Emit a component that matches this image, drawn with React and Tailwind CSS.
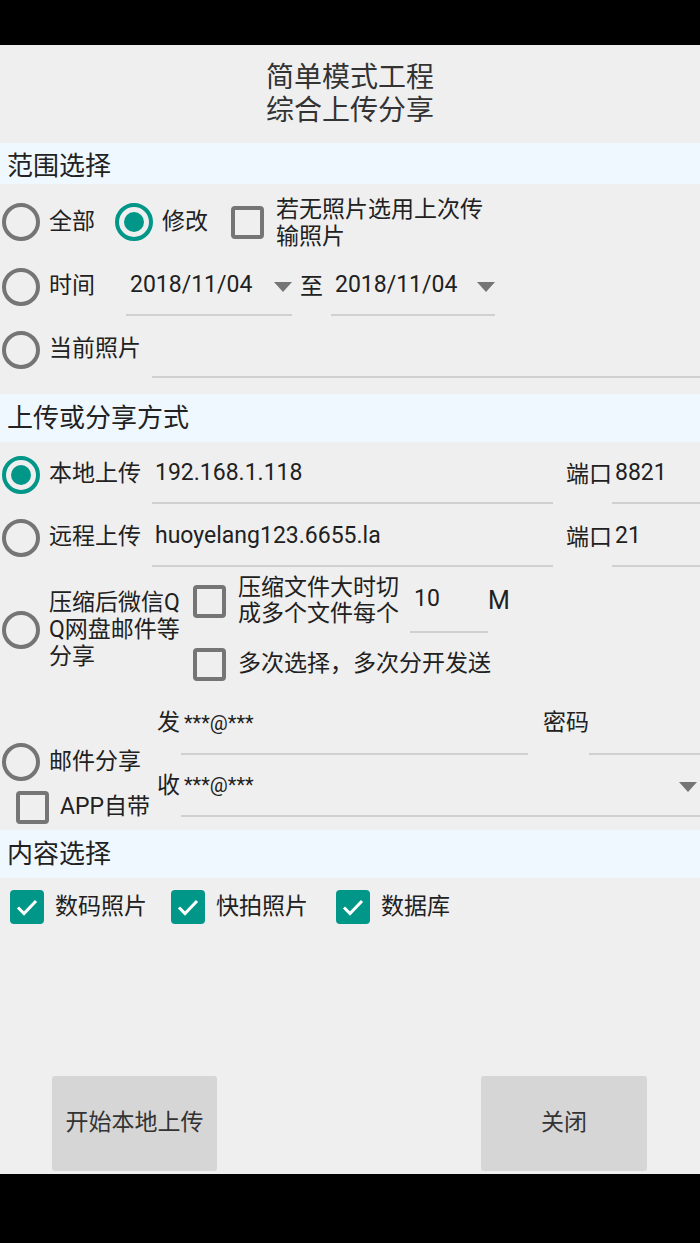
import React from 'react';

const Radio = ({ checked }) => (
  <div
    className={`w-[38px] h-[38px] shrink-0 rounded-full border-4 flex items-center justify-center ${
      checked ? 'border-[#009688]' : 'border-[#757575]'
    }`}
  >
    {checked && <div className="w-[20px] h-[20px] rounded-full bg-[#009688]" />}
  </div>
);

const Box = ({ checked }) =>
  checked ? (
    <div className="w-[34px] h-[34px] shrink-0 rounded-[4px] bg-[#009688] flex items-center justify-center">
      <svg width="28" height="28" viewBox="0 0 28 28">
        <polyline points="5,14.5 11,20.5 23,8" fill="none" stroke="#fff" strokeWidth="3" />
      </svg>
    </div>
  ) : (
    <div className="w-[33px] h-[33px] shrink-0 rounded-[4px] border-4 border-[#757575]" />
  );

const Caret = () => (
  <svg width="18" height="10" viewBox="0 0 18 10" className="shrink-0 mt-[3px]">
    <polygon points="0,0 18,0 9,10" fill="#757575" />
  </svg>
);

const Band = ({ children, tall }) => (
  <div
    className={`bg-[#f0f8ff] pl-[7px] flex items-center text-[26px] text-[#222] ${
      tall ? 'h-[48px]' : 'h-[41px] pt-[6px]'
    }`}
  >
    {children}
  </div>
);

export default function App() {
  return (
    <div className="h-[1243px] flex flex-col bg-black font-['Roboto','Noto_Sans_CJK_SC',sans-serif] text-[23px] text-[#212121]">
      <div className="h-[45px] shrink-0" />

      <div className="flex-1 flex flex-col bg-[#efefef]">
        {/* title */}
        <div className="h-[98px] pt-[16px] flex flex-col items-center text-[28px] leading-[33px] text-[#333]">
          <div>简单模式工程</div>
          <div>综合上传分享</div>
        </div>

        <Band>范围选择</Band>

        <div className="h-[70px] pt-[6px] pl-[2px] flex items-center">
          <Radio />
          <span className="ml-[9px]">全部</span>
          <div className="ml-[20px]">
            <Radio checked />
          </div>
          <span className="ml-[9px]">修改</span>
          <div className="ml-[23px]">
            <Box />
          </div>
          <div className="ml-[12px] leading-[27px] pt-[2px]">
            若无照片选用上次传
            <br />
            输照片
          </div>
        </div>

        <div className="h-[63px] pl-[2px] flex items-stretch">
          <div className="flex items-center pt-[2px]">
            <Radio />
            <span className="ml-[9px]">时间</span>
          </div>
          <div className="ml-[31px] w-[166px] flex items-center pl-[4px] pt-[3px] border-b-2 border-[#d0d0d0] mb-[1px]">
            <span className="flex-1">2018/11/04</span>
            <Caret />
          </div>
          <div className="ml-[8px] flex items-center pt-[3px]">至</div>
          <div className="ml-[8px] w-[164px] flex items-center pl-[4px] pt-[3px] border-b-2 border-[#d0d0d0] mb-[1px]">
            <span className="flex-1">2018/11/04</span>
            <Caret />
          </div>
        </div>

        <div className="h-[63px] pl-[2px] flex items-stretch">
          <div className="flex items-center pt-[2px]">
            <Radio />
            <span className="ml-[9px]">当前照片</span>
          </div>
          <div className="ml-[11px] flex-1 border-b-2 border-[#d0d0d0] mb-[2px]" />
        </div>

        <div className="h-[14px]" />
        <Band tall>上传或分享方式</Band>

        {[
          ['本地上传', '192.168.1.118', '8821', true],
          ['远程上传', 'huoyelang123.6655.la', '21', false],
        ].map(([label, host, port, on]) => (
          <div key={label} className="h-[63px] pl-[2px] flex items-stretch">
            <div className="flex items-center pt-[2px]">
              <Radio checked={on} />
              <span className="ml-[9px]">{label}</span>
            </div>
            <div className="ml-[11px] w-[401px] flex items-center pl-[3px] pt-[3px] border-b-2 border-[#d0d0d0] mb-[1px]">
              {host}
            </div>
            <div className="ml-[13px] w-[46px] flex items-center pt-[3px]">端口</div>
            <div className="flex-1 flex items-center pl-[3px] pt-[3px] border-b-2 border-[#d0d0d0] mb-[1px]">{port}</div>
          </div>
        ))}

        {/* compress share */}
        <div className="h-[129px] flex">
          <div className="w-[193px] pl-[2px] pb-[6px] flex items-center">
            <Radio />
            <div className="ml-[9px] leading-[27px]">
              压缩后微信Q
              <br />
              Q网盘邮件等
              <br />
              分享
            </div>
          </div>
          <div className="flex-1 flex flex-col">
            <div className="h-[66px] flex items-stretch">
              <div className="flex items-center">
                <Box />
                <div className="ml-[12px] leading-[26px]">
                  压缩文件大时切
                  <br />
                  成多个文件每个
                </div>
              </div>
              <div className="ml-[11px] w-[78px] flex items-center pl-[4px] border-b-2 border-[#d0d0d0] mb-[1px]">10</div>
              <div className="flex items-center text-[25px]">M</div>
            </div>
            <div className="h-[63px] flex items-center pb-[3px]">
              <Box />
              <span className="ml-[12px]">多次选择，多次分开发送</span>
            </div>
          </div>
        </div>

        {/* mail share */}
        <div className="h-[133px] flex">
          <div className="w-[157px] pt-[46px] flex flex-col">
            <div className="h-[38px] pl-[2px] flex items-center">
              <Radio />
              <span className="ml-[9px]">邮件分享</span>
            </div>
            <div className="mt-[9px] pl-[16px] flex items-center">
              <Box />
              <span className="ml-[11px]">APP自带</span>
            </div>
          </div>
          <div className="flex-1 flex flex-col">
            <div className="h-[58px] flex items-stretch">
              <div className="w-[24px] flex items-center pb-[6px]">发</div>
              <div className="w-[347px] flex items-center pl-[3px] pb-[4px] text-[20px] border-b-2 border-[#d0d0d0]">
                ***@***
              </div>
              <div className="ml-[15px] w-[46px] flex items-center pb-[6px]">密码</div>
              <div className="flex-1 border-b-2 border-[#d0d0d0]" />
            </div>
            <div className="h-[63px] flex items-stretch">
              <div className="w-[24px] flex items-center">收</div>
              <div className="flex-1 flex items-center pl-[3px] pr-[3px] text-[20px] border-b-2 border-[#d0d0d0] mb-[1px]">
                <span className="flex-1">***@***</span>
                <Caret />
              </div>
            </div>
          </div>
        </div>

        <Band tall>内容选择</Band>

        <div className="h-[58px] pl-[10px] flex items-center">
          <Box checked />
          <span className="ml-[11px]">数码照片</span>
          <div className="ml-[24px]">
            <Box checked />
          </div>
          <span className="ml-[11px]">快拍照片</span>
          <div className="ml-[28px]">
            <Box checked />
          </div>
          <span className="ml-[11px]">数据库</span>
        </div>

        <div className="flex-1" />

        <div className="h-[95px] mb-[3px] flex justify-between pl-[52px] pr-[53px]">
          <button className="w-[165px] rounded-[3px] bg-[#d6d6d6] text-[#333] text-[23px]">开始本地上传</button>
          <button className="w-[166px] rounded-[3px] bg-[#d6d6d6] text-[#333] text-[23px]">关闭</button>
        </div>
      </div>

      <div className="h-[69px] shrink-0" />
    </div>
  );
}
